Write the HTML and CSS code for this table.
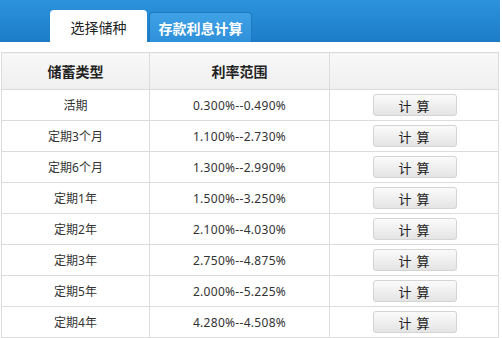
FILE: index.html
```html
<!DOCTYPE html>
<html lang="zh-CN">
<head>
<meta charset="utf-8">
<title>存款利息计算</title>
<link rel="stylesheet" href="styles.css">
</head>
<body>
<div class="page">
  <div class="tabbar">
    <div class="tab tab-active">选择储种</div>
    <div class="tab tab-other">存款利息计算</div>
  </div>
  <table class="rates">
    <thead>
      <tr><th class="c1">储蓄类型</th><th class="c2">利率范围</th><th class="c3"></th></tr>
    </thead>
    <tbody>
      <tr><td>活期</td><td class="num">0.300%--0.490%</td><td><button class="calc">计 算</button></td></tr>
      <tr><td>定期3个月</td><td class="num">1.100%--2.730%</td><td><button class="calc">计 算</button></td></tr>
      <tr><td>定期6个月</td><td class="num">1.300%--2.990%</td><td><button class="calc">计 算</button></td></tr>
      <tr><td>定期1年</td><td class="num">1.500%--3.250%</td><td><button class="calc">计 算</button></td></tr>
      <tr><td>定期2年</td><td class="num">2.100%--4.030%</td><td><button class="calc">计 算</button></td></tr>
      <tr><td>定期3年</td><td class="num">2.750%--4.875%</td><td><button class="calc">计 算</button></td></tr>
      <tr><td>定期5年</td><td class="num">2.000%--5.225%</td><td><button class="calc">计 算</button></td></tr>
      <tr><td>定期4年</td><td class="num">4.280%--4.508%</td><td><button class="calc">计 算</button></td></tr>
    </tbody>
  </table>
</div>
</body>
</html>
```
FILE: styles.css
```css
html, body {
  margin: 0;
  padding: 0;
  background: #ffffff;
}
body {
  font-family: "Noto Sans", "Noto Sans CJK SC", sans-serif;
  color: #333333;
}
.page {
  width: 500px;
}
.tabbar {
  height: 42px;
  box-sizing: border-box;
  padding-left: 50px;
  display: flex;
  align-items: flex-end;
  gap: 2px;
  background: linear-gradient(#2d93dc, #1c7cc8);
}
.tab {
  box-sizing: border-box;
  display: flex;
  align-items: center;
  justify-content: center;
  font-size: 14px;
  font-family: "Noto Sans CJK SC", sans-serif;
  border-radius: 4px 4px 0 0;
}
.tab-active {
  width: 97px;
  height: 32px;
  background: #ffffff;
  color: #222222;
  padding-top: 2px;
}
.tab-other {
  width: 103px;
  height: 30px;
  background: linear-gradient(#3fa2e6, #2f90da);
  border: 1px solid #1f79c0;
  border-bottom: none;
  color: #ffffff;
  font-weight: bold;
  padding-top: 1px;
}
.rates {
  margin: 10px 0 0 1px;
  width: 498px;
  border-collapse: collapse;
  table-layout: fixed;
  font-size: 12px;
}
.rates th, .rates td {
  border: 1px solid #dcdcdc;
  text-align: center;
  padding: 0;
}
.rates th {
  height: 36px;
  font-family: "Noto Sans CJK SC", sans-serif;
  font-size: 14px;
  font-weight: bold;
  color: #222222;
  background: linear-gradient(#f8f8f8, #efefef);
}
.rates td {
  height: 30px;
}
.rates td.num {
  letter-spacing: 0.3px;
}
.c1 { width: 147px; }
.c2 { width: 179px; }
.calc {
  width: 84px;
  height: 22px;
  margin-left: 1px;
  border: 1px solid #d4d4d4;
  border-radius: 3px;
  background: linear-gradient(#fbfbfb, #e4e4e4);
  font-family: "Noto Sans CJK SC", sans-serif;
  font-size: 13px;
  letter-spacing: 1px;
  color: #222222;
  padding: 0;
  vertical-align: middle;
}
```
